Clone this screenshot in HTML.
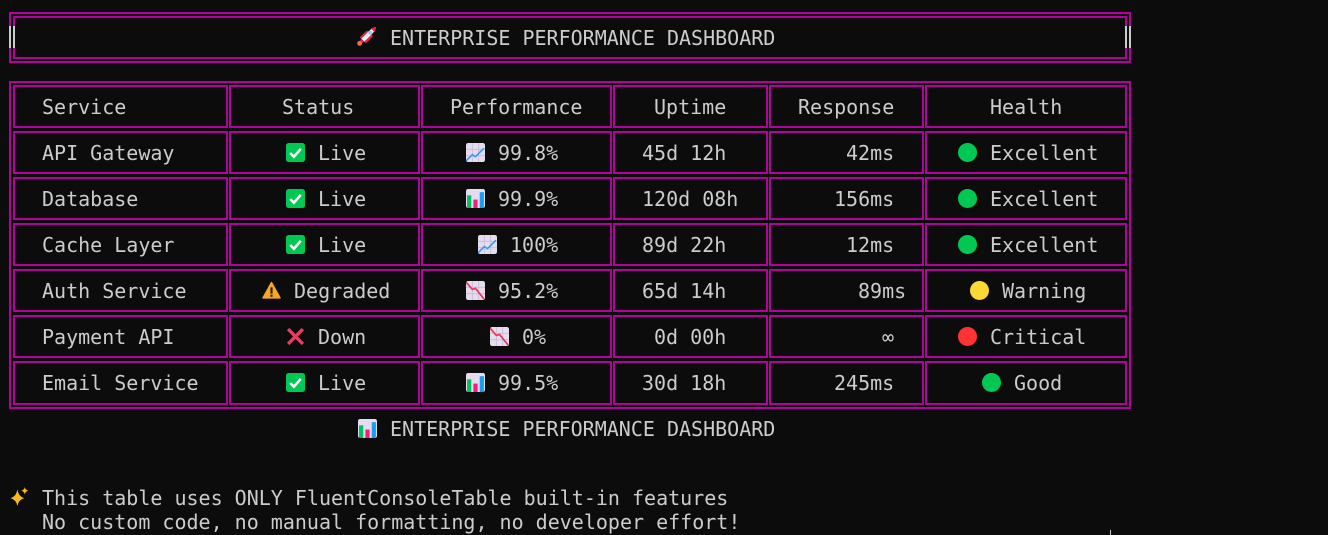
<!DOCTYPE html>
<html><head><meta charset="utf-8"><style>
html,body{margin:0;padding:0;background:#0c0c0c;width:1328px;height:535px;overflow:hidden;position:relative}
.b{position:absolute;border:2px solid #b4009e;box-sizing:border-box}
.t{position:absolute;font-family:"DejaVu Sans Mono","Liberation Mono",monospace;font-size:20px;line-height:24px;color:#cccccc;white-space:pre;height:24px}
.i{position:absolute;width:19px;height:19px;overflow:visible}
.g{position:absolute;background:#cccccc;width:2px}
</style></head><body>
<svg width="0" height="0" style="position:absolute">
<defs>
<symbol id="chk" viewBox="0 0 18 18"><rect x="0" y="0" width="18" height="18" rx="2.5" fill="#00c853"/><path d="M4 9.5 L7.5 13 L14 5.5" stroke="#fff" stroke-width="2.4" fill="none"/></symbol>
<symbol id="up" viewBox="0 0 18 18"><rect width="18" height="18" rx="2" fill="#e6dcef"/><path d="M0 6H18M0 12H18M6 0V18M12 0V18" stroke="#c8b8d8" stroke-width="0.8"/><path d="M0 17 L6 11 L9 13 L17 5" stroke="#3aa0e8" stroke-width="1.6" fill="none"/></symbol>
<symbol id="down" viewBox="0 0 18 18"><rect width="18" height="18" rx="2" fill="#e6dcef"/><path d="M0 6H18M0 12H18M6 0V18M12 0V18" stroke="#c8b8d8" stroke-width="0.8"/><path d="M0 1 L6 8 L9 7 L17 17" stroke="#e8365a" stroke-width="1.6" fill="none"/></symbol>
<symbol id="bar" viewBox="0 0 18 18"><rect width="18" height="18" rx="2" fill="#e6dcef"/><rect x="1" y="6" width="4" height="12" fill="#00c060"/><rect x="7" y="10" width="4" height="8" fill="#f0207a"/><rect x="13" y="3" width="4" height="15" fill="#18a0f0"/></symbol>
<symbol id="warn" viewBox="0 0 18 18"><path d="M9 1.5 L17 16 H1 Z" fill="#f5a623" stroke="#f5a623" stroke-width="1.5" stroke-linejoin="round"/><rect x="8" y="6" width="2" height="6" fill="#222"/><rect x="8" y="13" width="2" height="2" fill="#222"/></symbol>
<symbol id="x" viewBox="0 0 18 18"><path d="M2 2 L16 16 M16 2 L2 16" stroke="#f7355f" stroke-width="3.2"/></symbol>
<symbol id="rocket" viewBox="0 0 18 18"><path d="M4 11 L11 4 Q15 0.5 18 0 Q17.5 3 14 7 L7 14 Z" fill="#f0f0f4"/><path d="M14 7 L7 14 L8.5 15.5 L15 9 Z M4 11 L11 4 L9 3.5 L2.5 10 Z" fill="#e8204a"/><path d="M13 1.2 Q16 0 18 0 Q18 2 16.8 5 Z" fill="#e8204a"/><circle cx="12.5" cy="5.5" r="1.8" fill="#8ec8ec"/><path d="M4 11 L7 14 L5 15 L3 13 Z" fill="#e8204a"/><circle cx="2.5" cy="15.5" r="2.3" fill="#f07040"/></symbol>
<symbol id="spark" viewBox="0 0 18 18"><path d="M7 2 Q8 9 13.5 10.5 Q8 12 7 18 Q6 12 0.5 10.5 Q6 9 7 2Z" fill="#f8b820"/><path d="M14 0 Q14.5 3 17.5 3.5 Q14.5 4 14 7 Q13.5 4 10.5 3.5 Q13.5 3 14 0Z" fill="#f8b820"/></symbol>
</defs></svg>

<div class="b" style="left:9px;top:12px;width:1122px;height:51px"></div>
<div class="b" style="left:13px;top:16px;width:1114px;height:43px"></div>
<div class="g" style="left:9px;top:26px;height:22px"></div><div class="g" style="left:13px;top:26px;height:22px"></div>
<div class="g" style="left:1125px;top:26px;height:22px"></div><div class="g" style="left:1129px;top:26px;height:22px"></div>
<div style="position:absolute;left:11px;top:26px;width:2px;height:22px;background:#0c0c0c"></div>
<div style="position:absolute;left:1127px;top:26px;width:2px;height:22px;background:#0c0c0c"></div>
<svg class="i" style="left:357px;top:27px"><use href="#rocket" width="19" height="19"/></svg>
<div class="t" style="left:390px;top:26px">ENTERPRISE PERFORMANCE DASHBOARD</div>

<div class="b" style="left:9px;top:81px;width:1122px;height:328px"></div>

<div class="b" style="left:13px;top:85px;width:215px;height:43px"></div><div class="b" style="left:229px;top:85px;width:191px;height:43px"></div><div class="b" style="left:421px;top:85px;width:191px;height:43px"></div><div class="b" style="left:613px;top:85px;width:155px;height:43px"></div><div class="b" style="left:769px;top:85px;width:155px;height:43px"></div><div class="b" style="left:925px;top:85px;width:202px;height:43px"></div>
<div class="b" style="left:13px;top:131px;width:215px;height:43px"></div><div class="b" style="left:229px;top:131px;width:191px;height:43px"></div><div class="b" style="left:421px;top:131px;width:191px;height:43px"></div><div class="b" style="left:613px;top:131px;width:155px;height:43px"></div><div class="b" style="left:769px;top:131px;width:155px;height:43px"></div><div class="b" style="left:925px;top:131px;width:202px;height:43px"></div>
<div class="b" style="left:13px;top:177px;width:215px;height:43px"></div><div class="b" style="left:229px;top:177px;width:191px;height:43px"></div><div class="b" style="left:421px;top:177px;width:191px;height:43px"></div><div class="b" style="left:613px;top:177px;width:155px;height:43px"></div><div class="b" style="left:769px;top:177px;width:155px;height:43px"></div><div class="b" style="left:925px;top:177px;width:202px;height:43px"></div>
<div class="b" style="left:13px;top:223px;width:215px;height:43px"></div><div class="b" style="left:229px;top:223px;width:191px;height:43px"></div><div class="b" style="left:421px;top:223px;width:191px;height:43px"></div><div class="b" style="left:613px;top:223px;width:155px;height:43px"></div><div class="b" style="left:769px;top:223px;width:155px;height:43px"></div><div class="b" style="left:925px;top:223px;width:202px;height:43px"></div>
<div class="b" style="left:13px;top:269px;width:215px;height:43px"></div><div class="b" style="left:229px;top:269px;width:191px;height:43px"></div><div class="b" style="left:421px;top:269px;width:191px;height:43px"></div><div class="b" style="left:613px;top:269px;width:155px;height:43px"></div><div class="b" style="left:769px;top:269px;width:155px;height:43px"></div><div class="b" style="left:925px;top:269px;width:202px;height:43px"></div>
<div class="b" style="left:13px;top:315px;width:215px;height:43px"></div><div class="b" style="left:229px;top:315px;width:191px;height:43px"></div><div class="b" style="left:421px;top:315px;width:191px;height:43px"></div><div class="b" style="left:613px;top:315px;width:155px;height:43px"></div><div class="b" style="left:769px;top:315px;width:155px;height:43px"></div><div class="b" style="left:925px;top:315px;width:202px;height:43px"></div>
<div class="b" style="left:13px;top:361px;width:215px;height:44px"></div><div class="b" style="left:229px;top:361px;width:191px;height:44px"></div><div class="b" style="left:421px;top:361px;width:191px;height:44px"></div><div class="b" style="left:613px;top:361px;width:155px;height:44px"></div><div class="b" style="left:769px;top:361px;width:155px;height:44px"></div><div class="b" style="left:925px;top:361px;width:202px;height:44px"></div>

<div class="t" style="left:42px;top:95px">Service</div>
<div class="t" style="left:282px;top:95px">Status</div>
<div class="t" style="left:450px;top:95px">Performance</div>
<div class="t" style="left:654px;top:95px">Uptime</div>
<div class="t" style="left:798px;top:95px">Response</div>
<div class="t" style="left:990px;top:95px">Health</div>

<div class="t" style="left:42px;top:141px">API Gateway</div>
<svg class="i" style="left:286px;top:143px"><use href="#chk" width="19" height="19"/></svg><div class="t" style="left:318px;top:141px">Live</div>
<svg class="i" style="left:466px;top:143px"><use href="#up" width="19" height="19"/></svg><div class="t" style="left:498px;top:141px">99.8%</div>
<div class="t" style="left:642px;top:141px">45d 12h</div>
<div class="t" style="left:846px;top:141px">42ms</div>
<svg class="i" style="left:958px;top:143px"><circle cx="9.5" cy="9.5" r="9.5" fill="#00c853"/></svg><div class="t" style="left:990px;top:141px">Excellent</div>

<div class="t" style="left:42px;top:187px">Database</div>
<svg class="i" style="left:286px;top:189px"><use href="#chk" width="19" height="19"/></svg><div class="t" style="left:318px;top:187px">Live</div>
<svg class="i" style="left:466px;top:189px"><use href="#bar" width="19" height="19"/></svg><div class="t" style="left:498px;top:187px">99.9%</div>
<div class="t" style="left:642px;top:187px">120d 08h</div>
<div class="t" style="left:834px;top:187px">156ms</div>
<svg class="i" style="left:958px;top:189px"><circle cx="9.5" cy="9.5" r="9.5" fill="#00c853"/></svg><div class="t" style="left:990px;top:187px">Excellent</div>

<div class="t" style="left:42px;top:233px">Cache Layer</div>
<svg class="i" style="left:286px;top:235px"><use href="#chk" width="19" height="19"/></svg><div class="t" style="left:318px;top:233px">Live</div>
<svg class="i" style="left:478px;top:235px"><use href="#up" width="19" height="19"/></svg><div class="t" style="left:510px;top:233px">100%</div>
<div class="t" style="left:642px;top:233px">89d 22h</div>
<div class="t" style="left:846px;top:233px">12ms</div>
<svg class="i" style="left:958px;top:235px"><circle cx="9.5" cy="9.5" r="9.5" fill="#00c853"/></svg><div class="t" style="left:990px;top:233px">Excellent</div>

<div class="t" style="left:42px;top:279px">Auth Service</div>
<svg class="i" style="left:262px;top:281px"><use href="#warn" width="19" height="19"/></svg><div class="t" style="left:294px;top:279px">Degraded</div>
<svg class="i" style="left:466px;top:281px"><use href="#down" width="19" height="19"/></svg><div class="t" style="left:498px;top:279px">95.2%</div>
<div class="t" style="left:642px;top:279px">65d 14h</div>
<div class="t" style="left:858px;top:279px">89ms</div>
<svg class="i" style="left:970px;top:281px"><circle cx="9.5" cy="9.5" r="9.5" fill="#fdd835"/></svg><div class="t" style="left:1002px;top:279px">Warning</div>

<div class="t" style="left:42px;top:325px">Payment API</div>
<svg class="i" style="left:286px;top:327px"><use href="#x" width="19" height="19"/></svg><div class="t" style="left:318px;top:325px">Down</div>
<svg class="i" style="left:490px;top:327px"><use href="#down" width="19" height="19"/></svg><div class="t" style="left:522px;top:325px">0%</div>
<div class="t" style="left:654px;top:325px">0d 00h</div>
<div class="t" style="left:882px;top:325px">∞</div>
<svg class="i" style="left:958px;top:327px"><circle cx="9.5" cy="9.5" r="9.5" fill="#f33"/></svg><div class="t" style="left:990px;top:325px">Critical</div>

<div class="t" style="left:42px;top:371px">Email Service</div>
<svg class="i" style="left:286px;top:373px"><use href="#chk" width="19" height="19"/></svg><div class="t" style="left:318px;top:371px">Live</div>
<svg class="i" style="left:466px;top:373px"><use href="#bar" width="19" height="19"/></svg><div class="t" style="left:498px;top:371px">99.5%</div>
<div class="t" style="left:642px;top:371px">30d 18h</div>
<div class="t" style="left:834px;top:371px">245ms</div>
<svg class="i" style="left:982px;top:373px"><circle cx="9.5" cy="9.5" r="9.5" fill="#00c853"/></svg><div class="t" style="left:1014px;top:371px">Good</div>

<svg class="i" style="left:358px;top:419px"><use href="#bar" width="19" height="19"/></svg>
<div class="t" style="left:390px;top:417px">ENTERPRISE PERFORMANCE DASHBOARD</div>

<svg class="i" style="left:10px;top:487px"><use href="#spark" width="19" height="19"/></svg>
<div class="t" style="left:42px;top:486px">This table uses ONLY FluentConsoleTable built-in features</div>
<div class="t" style="left:42px;top:510px">No custom code, no manual formatting, no developer effort!</div>
<div style="position:absolute;left:1110px;top:530px;width:1px;height:5px;background:#cccccc"></div>
</body></html>
